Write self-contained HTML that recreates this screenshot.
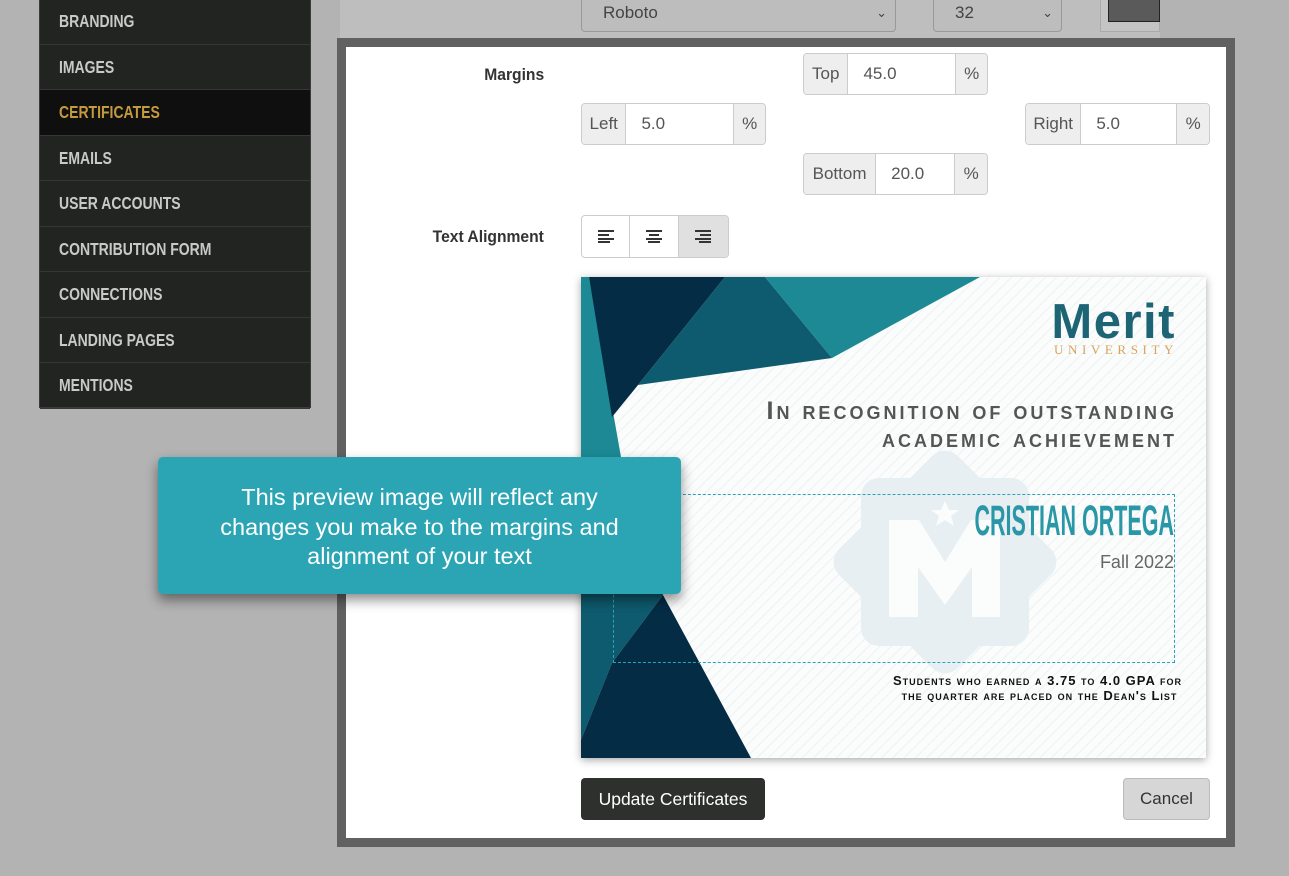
<!DOCTYPE html>
<html><head><meta charset="utf-8"><style>
*{box-sizing:border-box;margin:0;padding:0}
body{width:1289px;height:876px;background:#b3b3b3;position:relative;overflow:hidden;font-family:"Liberation Sans",sans-serif}
.abs{position:absolute}
.side{left:39px;top:-2px;width:272px;height:410px;background:#222422;border:1px solid #3a3c3a}
.side div{height:45.5px;border-bottom:1px solid #353735;color:#c9c9c9;font-weight:bold;font-size:17.5px;line-height:45px;padding-left:19px;white-space:nowrap}
.side div span{display:inline-block;transform:scaleX(.8);transform-origin:left}
.side div.act{background:#0f0f0f;color:#c49a3c}
.sel{border:1px solid #999;border-radius:4px;background:#bdbdbd;color:#444;font-size:17px;padding-left:21px;line-height:34px}
.modal{left:337px;top:38px;width:898px;height:809px;border:9px solid #616161;background:#fff}
.lbl{font-weight:bold;font-size:17px;color:#333;text-align:right;width:200px}
.lbl span{display:inline-block;transform:scaleX(.92);transform-origin:right}
.ig{display:flex;height:42px;border:1px solid #ccc;border-radius:4px;font-size:17px;color:#555;overflow:hidden}
.ig span{background:#eee;display:flex;align-items:center;justify-content:center}
.ig i{font-style:normal;background:#fff;display:flex;align-items:center;padding-left:15px;border-left:1px solid #ccc;border-right:1px solid #ccc}
.bg{display:flex;border:1px solid #ccc;border-radius:4px;overflow:hidden;height:43px}
.bg div{width:49px;display:flex;align-items:center;justify-content:center;border-right:1px solid #ccc}
.sc{font-variant:small-caps;text-align:right}
</style></head><body>
<div class="abs" style="left:340px;top:0;width:820px;height:38px;background:#bebebe"></div>
<div class="abs sel" style="left:581px;top:-5px;width:315px;height:37px">Roboto<span style="position:absolute;right:8px;font-size:13px">&#8964;</span></div>
<div class="abs sel" style="left:933px;top:-5px;width:129px;height:37px">32<span style="position:absolute;right:8px;font-size:13px">&#8964;</span></div>
<div class="abs" style="left:1100px;top:-5px;width:60px;height:37px;background:#c4c4c4;border:1px solid #aaa"></div>
<div class="abs" style="left:1108px;top:-2px;width:52px;height:24px;background:#5a5a5a;border:1px solid #222"></div>

<div class="abs side">
<div><span>BRANDING</span></div><div><span>IMAGES</span></div><div class="act"><span>CERTIFICATES</span></div><div><span>EMAILS</span></div><div><span>USER ACCOUNTS</span></div><div><span>CONTRIBUTION FORM</span></div><div><span>CONNECTIONS</span></div><div><span>LANDING PAGES</span></div><div><span>MENTIONS</span></div>
</div>

<div class="abs modal"></div>
<div class="abs lbl" style="left:344px;top:65px"><span>Margins</span></div>
<div class="abs ig" style="left:803px;top:53px;width:185px"><span style="width:44px">Top</span><i style="width:110px">45.0</i><span style="width:31px">%</span></div>
<div class="abs ig" style="left:581px;top:103px;width:185px"><span style="width:44px">Left</span><i style="width:110px">5.0</i><span style="width:31px">%</span></div>
<div class="abs ig" style="left:1025px;top:103px;width:185px"><span style="width:55px">Right</span><i style="width:98px">5.0</i><span style="width:32px">%</span></div>
<div class="abs ig" style="left:803px;top:153px;width:185px"><span style="width:72px">Bottom</span><i style="width:81px">20.0</i><span style="width:32px">%</span></div>
<div class="abs lbl" style="left:344px;top:227px"><span>Text Alignment</span></div>
<div class="abs bg" style="left:581px;top:215px;width:148px">
<div><svg width="16" height="13"><rect x="0" y="0" width="16" height="2" fill="#333"/><rect x="0" y="4" width="11" height="2" fill="#333"/><rect x="0" y="8" width="16" height="2" fill="#333"/><rect x="0" y="11" width="12" height="2" fill="#333"/></svg></div>
<div><svg width="16" height="13"><rect x="0" y="0" width="16" height="2" fill="#333"/><rect x="3" y="4" width="10" height="2" fill="#333"/><rect x="0" y="8" width="16" height="2" fill="#333"/><rect x="2" y="11" width="12" height="2" fill="#333"/></svg></div>
<div style="background:#e0e0e0;border-right:0;width:50px"><svg width="16" height="13"><rect x="0" y="0" width="16" height="2" fill="#333"/><rect x="5" y="4" width="11" height="2" fill="#333"/><rect x="0" y="8" width="16" height="2" fill="#333"/><rect x="4" y="11" width="12" height="2" fill="#333"/></svg></div>
</div>

<div class="abs" style="left:581px;top:277px;width:625px;height:481px;background:#fbfcfc;box-shadow:0 2px 8px rgba(0,0,0,.35);overflow:hidden">
<svg class="abs" style="left:0;top:0" width="625" height="481">
<defs><pattern id="p" width="8" height="8" patternUnits="userSpaceOnUse" patternTransform="rotate(45)"><rect width="1" height="8" fill="#eef1f2"/></pattern></defs>
<rect width="625" height="481" fill="url(#p)"/>
<rect x="280" y="201" width="168" height="168" rx="18" fill="#e8eff2"/>
<rect x="280" y="201" width="168" height="168" rx="18" fill="#e8eff2" transform="rotate(45 364 285)"/>
<path d="M308 243 h30 l26 42 26 -42 h29 v97 h-28 v-50 l-27 38 l-27 -38 v50 h-29z" fill="#fbfcfc"/>
<polygon points="364,224 368,233 378,233 370,239 373,249 364,243 355,249 358,239 350,233 360,233" fill="#fbfcfc"/>
<polygon points="0,0 8,0 40,180 0,180" fill="#1c8994"/>
<polygon points="0,180 45,180 82,318 0,318" fill="#0e5a6e"/>
<polygon points="0,318 82,318 31,386 0,463" fill="#0e5a6e"/>
<polygon points="8,0 144,0 57,108 31,140" fill="#042c45"/>
<polygon points="144,0 184,0 251,81 57,108" fill="#0e5a6e"/>
<polygon points="184,0 399,0 251,81" fill="#1c8994"/>
<polygon points="82,318 170,481 0,481 0,463 31,386" fill="#042c45"/>
</svg>
<div class="abs" style="right:30px;top:19px;color:#1d6575;font-weight:bold;font-size:49px;letter-spacing:1.5px;line-height:52px">Merit</div>
<div class="abs" style="right:28px;top:65px;color:#d9a35a;font-family:'Liberation Serif',serif;font-size:13px;letter-spacing:4.6px">UNIVERSITY</div>
<div class="abs sc" style="right:29px;top:120px;color:#555;font-size:25px;font-weight:bold;letter-spacing:3px;line-height:28px;white-space:nowrap">In recognition of outstanding<br>academic achievement</div>
<div class="abs" style="left:32px;top:217px;width:562px;height:169px;border:1px dashed #2aa4b8"></div>
<div class="abs" style="right:32px;top:220px;color:#2a97a8;font-weight:bold;font-size:43px;line-height:48px;transform:scaleX(.5);transform-origin:right;white-space:nowrap">CRISTIAN ORTEGA</div>
<div class="abs" style="right:32px;top:275px;color:#666;font-size:18px">Fall 2022</div>
<div class="abs sc" style="right:24px;top:396px;color:#111;font-size:13px;font-weight:bold;letter-spacing:1px;line-height:15px;white-space:nowrap">Students who earned a 3.75 to 4.0 GPA for<br>the quarter are placed on the Dean's List&nbsp;</div>
</div>

<div class="abs" style="left:158px;top:457px;width:523px;height:137px;background:#2ba5b4;border-radius:5px;box-shadow:0 6px 12px rgba(0,0,0,.45);color:#fff;font-size:23.5px;text-align:center;line-height:29.5px;padding-top:26px;white-space:nowrap">This preview image will reflect any<br>changes you make to the margins and<br>alignment of your text</div>

<div class="abs" style="left:581px;top:778px;width:184px;height:42px;background:#2e302d;border-radius:4px;color:#fff;font-size:17.5px;line-height:42px;text-align:center">Update Certificates</div>
<div class="abs" style="left:1123px;top:778px;width:87px;height:42px;background:#d6d6d6;border:1px solid #bbb;border-radius:4px;color:#333;font-size:17px;line-height:40px;text-align:center">Cancel</div>
</body></html>
